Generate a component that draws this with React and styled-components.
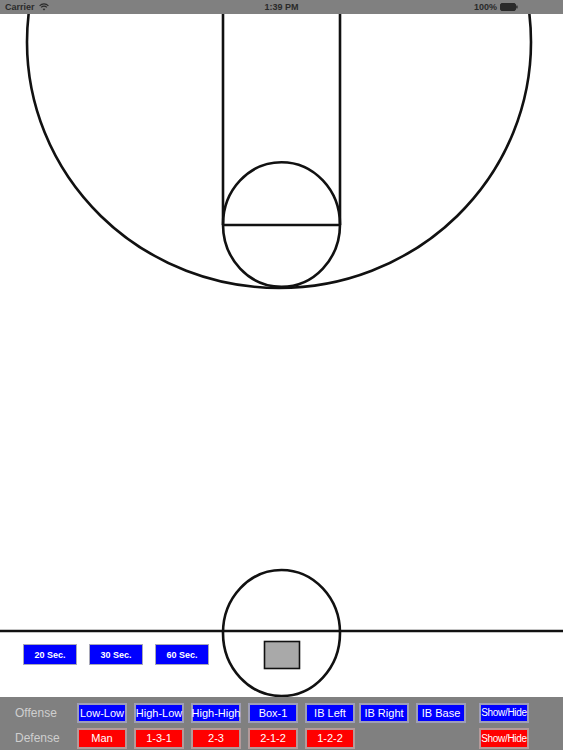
import React from "react";
import styled, { createGlobalStyle } from "styled-components";

const GlobalStyle = createGlobalStyle`
  html, body {
    margin: 0;
    padding: 0;
    background: #ffffff;
  }
  body {
    font-family: "Liberation Sans", Arial, Helvetica, sans-serif;
  }
`;

const offense = [
  { label: "Low-Low", left: 0 },
  { label: "High-Low", left: 7 },
  { label: "High-High", left: 7 },
  { label: "Box-1", left: 7 },
  { label: "IB Left", left: 7 },
  { label: "IB Right", left: 4 },
  { label: "IB Base", left: 7 },
];

const defense = [
  { label: "Man", left: 0 },
  { label: "1-3-1", left: 7 },
  { label: "2-3", left: 7 },
  { label: "2-1-2", left: 7 },
  { label: "1-2-2", left: 7 },
];

const timers = ["20 Sec.", "30 Sec.", "60 Sec."];

function App() {
  return (
    <>
      <GlobalStyle />
      <Screen>
        <StatusBar>
          <StatusLeft>
            Carrier
            <svg width="10" height="8" viewBox="0 0 10 8">
              <path d="M0.6 2.8 A6.2 6.2 0 0 1 9.4 2.8" fill="none" stroke="#2a2a2a" strokeWidth="1.2" />
              <path d="M2.2 4.4 A3.9 3.9 0 0 1 7.8 4.4" fill="none" stroke="#2a2a2a" strokeWidth="1.2" />
              <path d="M3.7 6 L5 7.4 L6.3 6 A1.9 1.9 0 0 0 3.7 6 Z" fill="#2a2a2a" />
            </svg>
          </StatusLeft>
          <StatusTime>1:39 PM</StatusTime>
          <StatusRight>
            100%
            <svg width="18" height="8" viewBox="0 0 18 8">
              <rect x="0.5" y="0.5" width="15" height="7" rx="1.5" fill="#2a2a2a" stroke="#2a2a2a" />
              <rect x="16.2" y="2.6" width="1.4" height="2.8" fill="#2a2a2a" />
            </svg>
          </StatusRight>
        </StatusBar>

        <Court>
          <CourtLines viewBox="0 14 563 683" preserveAspectRatio="none">
            <g fill="none" stroke="#111" strokeWidth="2.6">
              <ellipse cx="279" cy="42" rx="252" ry="246" />
              <line x1="223" y1="10" x2="223" y2="225" />
              <line x1="340" y1="10" x2="340" y2="225" />
              <line x1="223" y1="225" x2="340" y2="225" />
              <ellipse cx="281.5" cy="224.5" rx="58.5" ry="62.3" />
              <line x1="0" y1="631" x2="563" y2="631" strokeWidth="2.6" />
              <ellipse cx="281.5" cy="633" rx="58.5" ry="63" />
            </g>
            <rect x="264.5" y="641.5" width="35" height="27" fill="#a9a9a9" stroke="#111" strokeWidth="1.6" />
          </CourtLines>
          <TimerRow>
            {timers.map((t) => (
              <TimerButton key={t}>{t}</TimerButton>
            ))}
          </TimerRow>
        </Court>

        <Toolbar>
          <ToolRow>
            <RowLabel>Offense</RowLabel>
            {offense.map((b) => (
              <PlayButton key={b.label} $color="blue" $left={b.left}>
                {b.label}
              </PlayButton>
            ))}
            <ToggleButton $color="blue">Show/Hide</ToggleButton>
          </ToolRow>
          <ToolRow>
            <RowLabel>Defense</RowLabel>
            {defense.map((b) => (
              <PlayButton key={b.label} $color="red" $left={b.left}>
                {b.label}
              </PlayButton>
            ))}
            <Spacer />
            <ToggleButton $color="red">Show/Hide</ToggleButton>
          </ToolRow>
        </Toolbar>
      </Screen>
    </>
  );
}

const Screen = styled.div`
  width: 563px;
  height: 750px;
  display: flex;
  flex-direction: column;
  overflow: hidden;
  background: #ffffff;
`;

const StatusBar = styled.div`
  height: 14px;
  flex: none;
  background: #808080;
  display: flex;
  align-items: center;
  justify-content: space-between;
  padding: 0 5px;
  position: relative;
  font-size: 9px;
  font-weight: 700;
  color: #2a2a2a;
  box-sizing: border-box;
`;

const StatusLeft = styled.div`
  display: flex;
  align-items: center;
  gap: 4px;
`;

const StatusTime = styled.div`
  position: absolute;
  left: 0;
  right: 0;
  text-align: center;
  pointer-events: none;
`;

const StatusRight = styled.div`
  display: flex;
  align-items: center;
  gap: 3px;
  padding-right: 40px;
`;

const Court = styled.div`
  position: relative;
  flex: 1;
  background: #ffffff;
`;

const CourtLines = styled.svg`
  position: absolute;
  inset: 0;
  width: 563px;
  height: 683px;
  display: block;
`;

const TimerRow = styled.div`
  position: absolute;
  left: 23px;
  top: 630px;
  display: flex;
  gap: 12px;
`;

const TimerButton = styled.div`
  width: 54px;
  height: 21px;
  box-sizing: border-box;
  background: #0000ff;
  border: 1.5px solid #a8a8b8;
  color: #ffffff;
  font-size: 9px;
  font-weight: 700;
  display: flex;
  align-items: center;
  justify-content: center;
`;

const Toolbar = styled.div`
  height: 53px;
  flex: none;
  background: #808080;
  display: flex;
  flex-direction: column;
  gap: 5px;
  padding-top: 5.5px;
  box-sizing: border-box;
`;

const ToolRow = styled.div`
  display: flex;
  align-items: center;
  height: 20.5px;
`;

const RowLabel = styled.div`
  width: 62px;
  padding-left: 15px;
  font-size: 12px;
  color: #cfcfcf;
`;

const PlayButton = styled.div`
  width: 50px;
  height: 20.5px;
  margin-left: ${(p) => p.$left}px;
  box-sizing: border-box;
  background: ${(p) => (p.$color === "red" ? "#ff0000" : "#0000ff")};
  border: 2px solid ${(p) => (p.$color === "red" ? "#b49a9a" : "#9e9eb8")};
  color: #ffffff;
  font-size: 11px;
  white-space: nowrap;
  display: flex;
  align-items: center;
  justify-content: center;
  overflow: visible;
`;

const Spacer = styled.div`
  width: 111px;
`;

const ToggleButton = styled(PlayButton)`
  margin-left: 13px;
  font-size: 10px;
  letter-spacing: -0.3px;
`;

export default App;
